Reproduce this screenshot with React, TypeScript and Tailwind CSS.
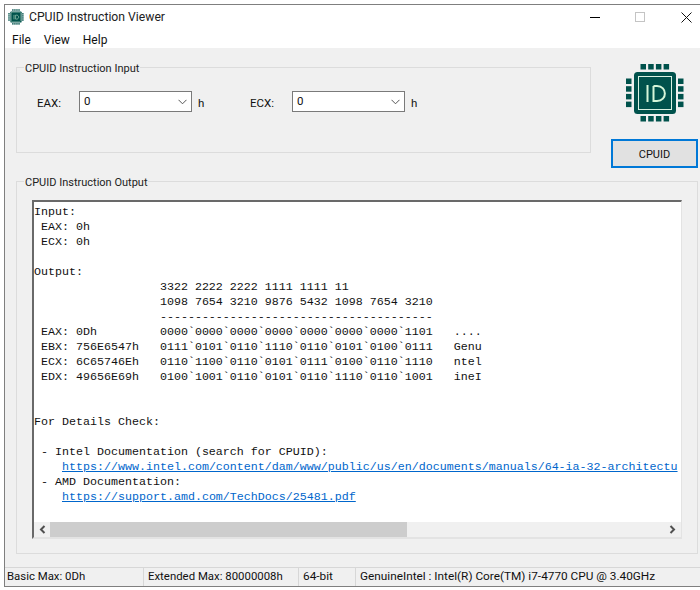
import React from "react";

const mono = "font-['Liberation_Mono',monospace] text-[11.67px] leading-[15px] whitespace-pre";

function Line({ children }: { children?: React.ReactNode }) {
  return <div className="h-[15px]">{children}</div>;
}

function Combo() {
  return (
    <div className="w-[113px] h-[21px] bg-white border border-[#7a7a7a] flex items-start justify-between pl-[4px] pr-[4px] text-[#111] leading-[18px]">
      <span>0</span>
      <svg width="9" height="6" viewBox="0 0 9 6" className="mt-[7px]" fill="none" stroke="#555" strokeWidth="1">
        <path d="M0.5 0.8 L4.5 4.8 L8.5 0.8" />
      </svg>
    </div>
  );
}

function Chip({ size }: { size: number }) {
  const c = "#00524c";
  const pos = [0, 1, 2, 3];
  return (
    <svg width={size} height={size} viewBox="0 0 60 60">
      {pos.map((i) => (
        <g key={i} fill={c}>
          <rect x={15.5 + i * 7.7} y="1" width="5.5" height="5.5" />
          <rect x={15.5 + i * 7.7} y="53" width="5.5" height="5.5" />
          <rect x="1" y={15.5 + i * 7.7} width="5.5" height="5.5" />
          <rect x="53" y={15.5 + i * 7.7} width="5.5" height="5.5" />
        </g>
      ))}
      <rect x="9" y="9" width="42" height="42" rx="3.5" fill={c} />
      <rect x="13.5" y="13.5" width="33" height="33" fill="none" stroke="#d9f2e2" strokeWidth="1" />
      <path d="M22.5 22 V39 M28.5 23 V38 H32 C42.5 38 42.5 23 32 23 H28.5" fill="none" stroke="#d5f5d8" strokeWidth="2" />
    </svg>
  );
}

function Chevron({ d }: { d: string }) {
  return (
    <svg width="7" height="9" viewBox="0 0 7 9" fill="none" stroke="#505050" strokeWidth="2">
      <path d={d} />
    </svg>
  );
}

export default function App() {
  return (
    <div className="w-[700px] h-[590px] bg-white pl-[4px] pt-[4px] overflow-hidden font-['Roboto',sans-serif] text-[11.5px] text-[#111]">
      <div className="w-[696px] h-[583px] border-l border-t border-b border-[#7f7f7f] flex flex-col bg-white">
        {/* title bar */}
        <div className="h-[24px] flex items-center shrink-0">
          <div className="ml-[3px] w-[16px] h-[16px] flex items-center justify-center">
            <Chip size={16} />
          </div>
          <span className="ml-[5px] text-[12.2px] text-[#222]">CPUID Instruction Viewer</span>
          <div className="ml-auto flex items-center">
            <div className="w-[10px] h-[1px] bg-black mr-[35px]" />
            <div className="w-[10px] h-[10px] border border-[#c4c4c4] mr-[36px]" />
            <svg width="11" height="11" viewBox="0 0 11 11" stroke="#111" strokeWidth="1" className="mr-[8px]">
              <path d="M0.5 0.5 L10.5 10.5 M10.5 0.5 L0.5 10.5" />
            </svg>
          </div>
        </div>
        {/* menu */}
        <div className="h-[19px] pt-[3px] flex items-center gap-[13px] pl-[7px] shrink-0 text-[12px] text-[#111]">
          <span>File</span>
          <span>View</span>
          <span>Help</span>
        </div>
        {/* client */}
        <div className="flex-1 bg-[#f0f0f0] flex flex-col pl-[11px] min-h-0">
          <div className="flex pt-[19px] h-[133px] shrink-0">
            <fieldset className="w-[575px] h-[86px] border border-[#dcdcdc] relative">
              <span className="absolute left-[7px] -top-[7px] px-[1px] bg-[#f0f0f0] leading-[15px] text-[11px] text-[#222]">CPUID Instruction Input</span>
              <div className="flex items-start pt-[23px] pl-[20px]">
                <span className="w-[42px] pt-[5px] leading-[15px]">EAX:</span>
                <Combo />
                <span className="w-[58px] pl-[6px] pt-[5px] leading-[15px]">h</span>
                <span className="w-[42px] pt-[5px] leading-[15px]">ECX:</span>
                <Combo />
                <span className="pl-[6px] pt-[5px] leading-[15px]">h</span>
              </div>
            </fieldset>
            <div className="ml-[20px] w-[87px] flex flex-col items-center -mt-[4px]">
              <Chip size={60} />
              <div className="mt-[16px] w-[87px] h-[29px] shrink-0 border-[2px] border-[#0078d7] bg-[#e1e1e1] flex items-center justify-center pt-[3px] text-[11px] text-[#111]">
                CPUID
              </div>
            </div>
          </div>
          {/* output group */}
          <fieldset className="w-[682px] h-[373px] border border-[#dcdcdc] relative pl-[15px] pt-[18px] shrink-0">
            <span className="absolute left-[7px] -top-[7px] px-[1px] bg-[#f0f0f0] leading-[15px] text-[11px] text-[#222]">CPUID Instruction Output</span>
            <div className="w-[650px] h-[339px] bg-white border-t-[2px] border-l-[2px] border-[#696969] border-r border-b-[2px] border-r-[#e3e3e3] border-b-[#e3e3e3] flex flex-col overflow-hidden">
              <div className={`${mono} flex-1 min-h-0 overflow-hidden pl-0 pt-[3px] text-[#111]`}>
                <Line>Input:</Line>
                <Line> EAX: 0h</Line>
                <Line> ECX: 0h</Line>
                <Line />
                <Line>Output:</Line>
                <Line>                  3322 2222 2222 1111 1111 11</Line>
                <Line>                  1098 7654 3210 9876 5432 1098 7654 3210</Line>
                <Line>                  ---------------------------------------</Line>
                <Line> EAX: 0Dh         0000`0000`0000`0000`0000`0000`0000`1101   ....</Line>
                <Line> EBX: 756E6547h   0111`0101`0110`1110`0110`0101`0100`0111   Genu</Line>
                <Line> ECX: 6C65746Eh   0110`1100`0110`0101`0111`0100`0110`1110   ntel</Line>
                <Line> EDX: 49656E69h   0100`1001`0110`0101`0110`1110`0110`1001   ineI</Line>
                <Line />
                <Line />
                <Line>For Details Check:</Line>
                <Line />
                <Line> - Intel Documentation (search for CPUID):</Line>
                <Line>
                  {"    "}
                  <span className="text-[#0066cc] underline">https://www.intel.com/content/dam/www/public/us/en/documents/manuals/64-ia-32-architectu</span>
                </Line>
                <Line> - AMD Documentation:</Line>
                <Line>
                  {"    "}
                  <span className="text-[#0066cc] underline">https://support.amd.com/TechDocs/25481.pdf</span>
                </Line>
              </div>
              <div className="h-[15px] bg-[#f0f0f0] flex items-center shrink-0">
                <div className="w-[16px] flex justify-center">
                  <Chevron d="M5.5 1 L2 4.5 L5.5 8" />
                </div>
                <div className="w-[357px] h-[15px] bg-[#cdcdcd]" />
                <div className="ml-auto w-[17px] flex justify-center">
                  <Chevron d="M1.5 1 L5 4.5 L1.5 8" />
                </div>
              </div>
            </div>
          </fieldset>
          <div className="flex-1" />
          {/* status bar */}
          <div className="-ml-[11px] h-[19px] border-t border-[#d7d7d7] flex items-center shrink-0 text-[#111]">
            <span className="w-[139px] pl-[2px] h-full flex items-center border-r border-[#d7d7d7] text-[11.4px]">Basic Max: 0Dh</span>
            <span className="w-[155px] pl-[4px] h-full flex items-center border-r border-[#d7d7d7] text-[11.4px]">Extended Max: 80000008h</span>
            <span className="w-[57px] pl-[4px] h-full flex items-center border-r border-[#d7d7d7] text-[11.8px]">64-bit</span>
            <span className="pl-[4px] text-[11.8px]">GenuineIntel : Intel(R) Core(TM) i7-4770 CPU @ 3.40GHz</span>
          </div>
        </div>
      </div>
    </div>
  );
}
